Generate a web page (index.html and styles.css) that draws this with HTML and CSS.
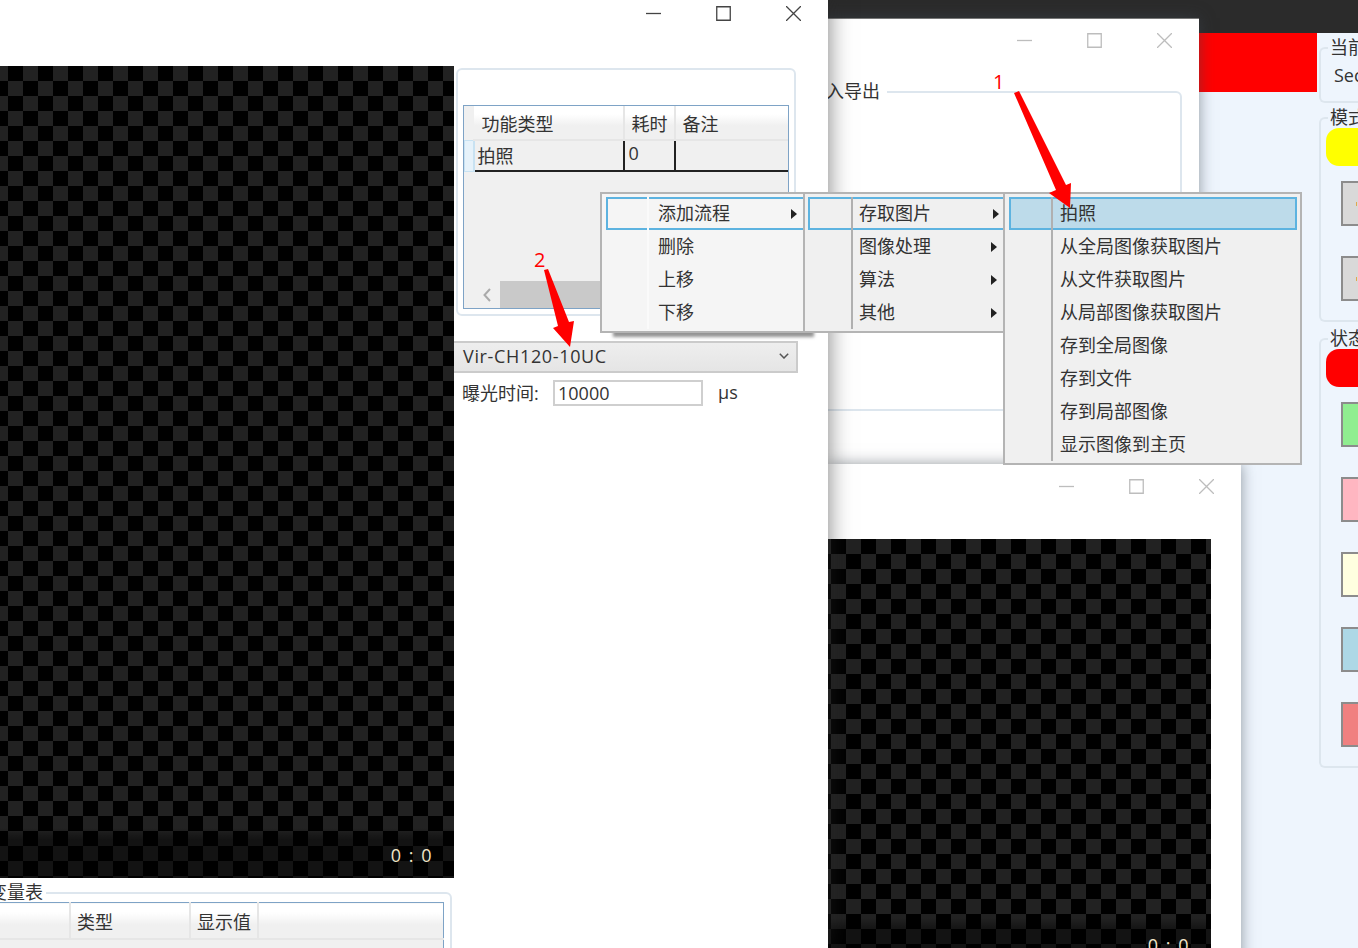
FILE: index.html
```html
<!DOCTYPE html>
<html lang="zh-CN">
  <head>
    <meta charset="UTF-8" />
    <title>流程编辑</title>
    <link rel="stylesheet" href="styles.css">
  </head>
  <body>
    <div class="desktop">
      <!-- main app behind the dialogs -->
      <div class="top-bar"></div>
      <div class="app">
        <div class="app-main">
          <div class="red-band"></div>
        </div>
        <div class="side">
          <div class="group group-current">
            <span class="group-title">当前状态</span>
            <div class="side-value">Second</div>
          </div>
          <div class="group group-mode">
            <span class="group-title">模式切换</span>
            <div class="pill pill-yellow"></div>
            <div class="swatch swatch-gray"><i class="mark"></i></div>
            <div class="swatch swatch-gray"><i class="mark"></i></div>
          </div>
          <div class="group group-state">
            <span class="group-title">状态显示</span>
            <div class="pill pill-red"></div>
            <div class="swatch swatch-green"></div>
            <div class="swatch swatch-pink"></div>
            <div class="swatch swatch-yellow"></div>
            <div class="swatch swatch-blue"></div>
            <div class="swatch swatch-coral"></div>
          </div>
        </div>
      </div>

      <!-- io dialog -->
      <div class="window window-io">
        <div class="title-bar faded">
          <button class="win-btn"><svg viewBox="0 0 15 15"><path d="M0 7.5H15" /></svg></button>
          <button class="win-btn"><svg viewBox="0 0 15 15"><path d="M.75.75H14.25V14.25H.75Z" /></svg></button>
          <button class="win-btn"><svg viewBox="0 0 15 15"><path d="M0 0L15 15M15 0L0 15" /></svg></button>
        </div>
        <div class="io-body">
          <div class="group group-io">
            <span class="group-title">输入导出</span>
          </div>
        </div>
      </div>

      <!-- second camera dialog -->
      <div class="window window-view">
        <div class="title-bar faded">
          <button class="win-btn"><svg viewBox="0 0 15 15"><path d="M0 7.5H15" /></svg></button>
          <button class="win-btn"><svg viewBox="0 0 15 15"><path d="M.75.75H14.25V14.25H.75Z" /></svg></button>
          <button class="win-btn"><svg viewBox="0 0 15 15"><path d="M0 0L15 15M15 0L0 15" /></svg></button>
        </div>
        <div class="viewer viewer-small">
          <div class="viewer-shade"></div>
          <span class="viewer-pos">0 : 0</span>
        </div>
      </div>

      <!-- main dialog -->
      <div class="window window-main">
        <div class="title-bar">
          <button class="win-btn"><svg viewBox="0 0 15 15"><path d="M0 7.5H15" /></svg></button>
          <button class="win-btn"><svg viewBox="0 0 15 15"><path d="M.75.75H14.25V14.25H.75Z" /></svg></button>
          <button class="win-btn"><svg viewBox="0 0 15 15"><path d="M0 0L15 15M15 0L0 15" /></svg></button>
        </div>
        <div class="main-body">
          <div class="col-left">
            <div class="viewer viewer-large">
              <div class="viewer-shade"></div>
              <span class="viewer-pos">0 : 0</span>
            </div>
            <div class="group group-vars">
              <span class="group-title">变量表</span>
              <table class="grid grid-vars">
                <tr>
                  <th class="col-name"></th>
                  <th class="col-type">类型</th>
                  <th class="col-show">显示值</th>
                  <th></th>
                </tr>
                <tr>
                  <td class="vars-empty" colspan="4"></td>
                </tr>
              </table>
            </div>
          </div>
          <div class="col-right">
            <div class="group group-flow">
              <div class="flow-table">
                <table class="grid grid-flow">
                  <tr>
                    <th class="stub"></th>
                    <th class="col-func">功能类型</th>
                    <th class="col-time">耗时</th>
                    <th>备注</th>
                  </tr>
                  <tr>
                    <td class="stub"></td>
                    <td class="cell-func">拍照</td>
                    <td class="cell-time">0</td>
                    <td></td>
                  </tr>
                </table>
                <div class="scroll-bar">
                  <div class="scroll-left">
                    <svg viewBox="0 0 8 14"><path d="M7 1L1.5 7L7 13" /></svg>
                  </div>
                  <div class="scroll-thumb"></div>
                </div>
              </div>
            </div>
            <div class="combo">
              <span>Vir-CH120-10UC</span>
              <svg viewBox="0 0 10 6"><path d="M.8.8L5 5L9.2.8" /></svg>
            </div>
            <div class="exposure">
              <label for="exposureTime">曝光时间:</label>
              <input type="text" id="exposureTime" value="10000" />
              <span class="unit">μs</span>
            </div>
          </div>
        </div>
      </div>

      <!-- context menu and its two open submenus -->
      <div class="menus">
        <ul class="menu menu-first">
          <li class="item active"><span class="gutter"></span><span class="label">添加流程</span><i class="caret"></i></li>
          <li class="item"><span class="gutter"></span><span class="label">删除</span></li>
          <li class="item"><span class="gutter"></span><span class="label">上移</span></li>
          <li class="item"><span class="gutter"></span><span class="label">下移</span></li>
        </ul>
        <ul class="menu menu-second">
          <li class="item active"><span class="gutter"></span><span class="label">存取图片</span><i class="caret"></i></li>
          <li class="item"><span class="gutter"></span><span class="label">图像处理</span><i class="caret"></i></li>
          <li class="item"><span class="gutter"></span><span class="label">算法</span><i class="caret"></i></li>
          <li class="item"><span class="gutter"></span><span class="label">其他</span><i class="caret"></i></li>
        </ul>
        <ul class="menu menu-third">
          <li class="item selected"><span class="gutter"></span><span class="label">拍照</span></li>
          <li class="item"><span class="gutter"></span><span class="label">从全局图像获取图片</span></li>
          <li class="item"><span class="gutter"></span><span class="label">从文件获取图片</span></li>
          <li class="item"><span class="gutter"></span><span class="label">从局部图像获取图片</span></li>
          <li class="item"><span class="gutter"></span><span class="label">存到全局图像</span></li>
          <li class="item"><span class="gutter"></span><span class="label">存到文件</span></li>
          <li class="item"><span class="gutter"></span><span class="label">存到局部图像</span></li>
          <li class="item"><span class="gutter"></span><span class="label">显示图像到主页</span></li>
        </ul>
      </div>

      <!-- red annotations drawn on top of the screenshot -->
      <svg class="arrows" viewBox="0 0 1358 948">
        <path d="M1014 93L1019 91L1066 185L1071 183L1070 208L1049 193L1056 190Z" />
        <path d="M544 270L548 269L569 322L574 321L570 347L553 328L558 326Z" />
      </svg>
      <span class="note note-one">1</span>
      <span class="note note-two">2</span>
    </div>
  </body>
</html>
```

FILE: styles.css
```css
* {
  box-sizing: border-box;
}
body {
  margin: 0;
  font-family: "Open Sans", "Noto Sans CJK SC", sans-serif;
  font-size: 18px;
  color: #333;
}
.desktop {
  position: relative;
  width: 1358px;
  height: 948px;
  overflow: hidden;
  background-color: #eef5fd;
}
.top-bar {
  height: 33px;
  background-color: #2b2b2b;
}
.app {
  display: flex;
  height: 915px;
}
.app-main {
  flex: 1;
}
.red-band {
  height: 59px;
  background-color: #ff0000;
}
.side {
  width: 41px;
  padding: 14px 0 0 2px;
  display: flex;
  flex-direction: column;
}

/* group boxes */
.group {
  border: 2px solid #dde6ee;
  border-radius: 6px;
}
.group-title {
  display: block;
  width: fit-content;
  margin: -14px 0 0 8px;
  padding: 0 3px;
  line-height: 24px;
  white-space: nowrap;
}
.side .group {
  width: 120px;
  border-right: 0;
  padding-left: 5px;
}
.side .group-title {
  margin-left: 2px;
  padding: 0 2px;
  background-color: #eef5fd;
}
.group-current {
  height: 56px;
}
.group-mode {
  height: 205px;
  margin-top: 14px;
}
.group-state {
  height: 430px;
  margin-top: 16px;
}
.side-value {
  margin: 4px 0 0 8px;
  line-height: 24px;
}
.pill {
  width: 100px;
  height: 38px;
  margin-top: -1px;
  border-radius: 13px;
}
.pill-yellow {
  background-color: #ffff00;
}
.pill-red {
  background-color: #ff0000;
}
.swatch {
  width: 90px;
  height: 45px;
  margin: 15px 0 30px 15px;
  border: 2px solid #8c8c8c;
}
.pill + .swatch {
  margin-top: 15px;
}
.swatch-gray {
  background-color: #d9d9d9;
  padding: 19px 0 0 13px;
}
.mark {
  display: block;
  width: 1px;
  height: 4px;
  background-color: #e0a94e;
}
.swatch-green {
  background-color: #90ee90;
}
.swatch-pink {
  background-color: #ffb6c1;
}
.swatch-yellow {
  background-color: #ffffe0;
}
.swatch-blue {
  background-color: #add8e6;
}
.swatch-coral {
  background-color: #f08080;
}

/* windows */
.window {
  position: absolute;
  background-color: #fff;
  box-shadow: 0 0 14px rgba(60, 70, 80, 0.55);
}
.window-io {
  left: 780px;
  top: 18px;
  width: 419px;
  height: 460px;
  border-top: 1px solid #777;
}
.window-io .title-bar {
  margin-top: -1px;
}
.window-view {
  left: 828px;
  top: 464px;
  width: 413px;
  height: 500px;
  overflow: hidden;
}
.window-main {
  left: 0;
  top: -9px;
  width: 828px;
  height: 957px;
  box-shadow: 0 0 22px rgba(40, 40, 40, 0.6);
}
.title-bar {
  height: 44px;
  display: flex;
  justify-content: flex-end;
  color: #444;
}
.title-bar.faded {
  color: #bdbdbd;
}
.win-btn {
  width: 70px;
  height: 44px;
  padding: 0;
  border: 0;
  background: none;
  color: inherit;
  display: flex;
  align-items: center;
  justify-content: center;
}
.win-btn svg {
  width: 15px;
  height: 15px;
  fill: none;
  stroke: currentColor;
  stroke-width: 1.3;
}
.io-body {
  padding: 29px 17px 0 17px;
}
.group-io {
  height: 320px;
}
.group-io .group-title {
  margin-left: 6px;
  padding-right: 7px;
  background-color: #fff;
}

/* image viewers */
.viewer {
  position: relative;
  overflow: hidden;
  background-image: conic-gradient(#222 25%, #000 0 50%, #222 0 75%, #000 0);
  background-size: 30px 30px;
}
.viewer-large {
  width: 454px;
  height: 812px;
  background-position: 8px 0;
}
.viewer-small {
  width: 383px;
  height: 429px;
  margin-top: 31px;
  background-position: 3px 0;
}
.viewer-shade {
  position: absolute;
  left: 0;
  right: 0;
  bottom: 0;
  height: 50px;
  background: linear-gradient(rgba(0, 0, 0, 0), rgba(0, 0, 0, 0.45) 12px);
}
.viewer-pos {
  position: absolute;
  right: 21px;
  bottom: 10px;
  color: #f2e6c8;
  line-height: 26px;
  letter-spacing: 1.5px;
  white-space: nowrap;
}

/* main window content */
.main-body {
  display: flex;
  padding-top: 31px;
}
.col-left {
  width: 454px;
}
.col-right {
  width: 374px;
}
.group-vars {
  width: 474px;
  height: 70px;
  margin: 14px 0 0 -22px;
  padding-right: 6px;
}
.group-vars .group-title {
  margin-left: 6px;
  margin-top: -14px;
  background-color: #fff;
}
.grid {
  border-collapse: collapse;
  table-layout: fixed;
  font-weight: normal;
}
.grid th {
  height: 34px;
  padding: 0 0 0 7px;
  font-weight: normal;
  text-align: left;
  background: linear-gradient(#fff 25%, #f0f0f0 60%);
  border-right: 2px solid #e6e6e6;
  border-bottom: 2px solid #e6e6e6;
}
.grid th:last-child {
  border-right: 0;
}
.grid-vars {
  width: 100%;
  margin-top: -2px;
  border-top: 1px solid #7ea3c6;
  border-right: 1px solid #7ea3c6;
}
.grid-vars th {
  height: 36px;
  padding: 2px 0 0 6px;
}
.col-name {
  width: 90px;
}
.col-type {
  width: 120px;
}
.col-show {
  width: 68px;
}
.vars-empty {
  height: 30px;
  background-color: #f0f0f0;
}
.group-flow {
  width: 340px;
  height: 248px;
  margin: 2px 0 0 2px;
  padding: 35px 0 0 5px;
}
.flow-table {
  width: 326px;
  height: 204px;
  display: flex;
  flex-direction: column;
  border: 1px solid #7ea3c6;
  background-color: #f0f0f0;
}
.grid-flow {
  width: 100%;
}
.grid-flow th.stub {
  width: 9px;
  padding: 0;
  background: #f0f0f0;
  border: 0;
}
.grid-flow td.stub {
  padding: 0;
  background-color: #e6f2fa;
  border: 1px solid #c8e2f2;
  border-right-width: 2px;
}
.col-func {
  width: 150px;
}
.col-time {
  width: 51px;
}
.grid-flow th.col-func {
  padding-left: 8px;
}
.grid-flow td {
  height: 31px;
  padding: 0 0 0 3px;
  border-right: 2px solid #222;
  border-bottom: 2px solid #222;
  line-height: 26px;
}
.grid-flow td:last-child {
  border-right: 0;
}
.grid-flow td.stub {
  border-bottom: 1px solid #c8e2f2;
}
.grid-flow td.cell-time {
  vertical-align: top;
  line-height: 24px;
  padding-left: 4px;
}
.scroll-bar {
  margin-top: auto;
  height: 27px;
  display: flex;
}
.scroll-left {
  width: 36px;
  padding-right: 9px;
  display: flex;
  align-items: center;
  justify-content: flex-end;
}
.scroll-left svg {
  width: 8px;
  height: 14px;
  fill: none;
  stroke: #aaa;
  stroke-width: 2;
}
.scroll-thumb {
  flex: 1;
  background-color: #c9c9c9;
}
.combo {
  width: 344px;
  height: 32px;
  margin-top: 25px;
  padding: 0 7px 2px 9px;
  display: flex;
  align-items: center;
  justify-content: space-between;
  background: linear-gradient(#eee, #e5e5e5);
  border: 2px solid #cbcbcb;
  border-left: 0;
  letter-spacing: 0.65px;
}
.combo svg {
  width: 10px;
  height: 6px;
  fill: none;
  stroke: #555;
  stroke-width: 1.5;
}
.exposure {
  height: 26px;
  margin-top: 7px;
  padding-left: 8px;
  display: flex;
  align-items: center;
}
.exposure label {
  width: 77px;
  padding-bottom: 2px;
}
.exposure input {
  width: 150px;
  height: 26px;
  margin-left: 14px;
  padding: 0 3px;
  font: inherit;
  color: #333;
  border: 2px solid #cfcfcf;
}
.unit {
  margin-left: 15px;
  padding-bottom: 2px;
}

/* context menu */
.menus {
  position: absolute;
  left: 600px;
  top: 192px;
  display: flex;
  align-items: flex-start;
}
.menu {
  position: relative;
  list-style: none;
  margin: 0;
  border: 2px solid #b4b4b4;
  padding: 3px 0 2px;
  background-color: #f0f0f0;
}
.menu-first {
  width: 203px;
  padding-left: 4px;
  background-color: #f5f5f5;
  border-right: 0;
  box-shadow: 12px 5px 3px -1px rgba(60, 60, 60, 0.55);
}
.menu-second {
  width: 200px;
  padding-left: 3px;
  border-right: 0;
}
.menu-third {
  width: 299px;
  padding: 3px 3px 2px 4px;
}
.item {
  height: 33px;
  display: flex;
  align-items: center;
  border: 2px solid transparent;
  white-space: nowrap;
}
.item.active {
  border-color: #5db3e0;
  border-right-width: 0;
}
.item.selected {
  border-color: #5db3e0;
  background-color: #bddbea;
}
.label {
  padding-bottom: 4px;
}
.gutter {
  height: 33px;
  margin: -2px 0;
  flex: none;
  border-right: 2px solid #b0b0b0;
}
.menu-first .gutter {
  width: 41px;
  margin-right: 9px;
  border-right-color: #fafafa;
}
.menu-second .gutter {
  width: 43px;
  margin-right: 6px;
}
.menu-third .gutter {
  width: 42px;
  margin-right: 7px;
}
.caret {
  margin-left: auto;
  margin-right: 6px;
  border-left: 6px solid #222;
  border-top: 5px solid transparent;
  border-bottom: 5px solid transparent;
}
.menu-second .caret {
  margin-right: 4px;
}

/* annotations */
.arrows {
  position: absolute;
  left: 0;
  top: 0;
  width: 1358px;
  height: 948px;
  fill: #ff0000;
}
.note {
  position: absolute;
  color: #ff0000;
  font-size: 20px;
  line-height: 24px;
}
.note-one {
  left: 993px;
  top: 70px;
}
.note-two {
  left: 534px;
  top: 248px;
}
```
